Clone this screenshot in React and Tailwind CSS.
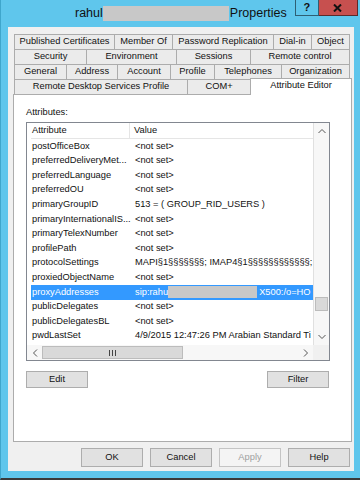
import React from 'react';

const tabRows = [
  [
    ['Published Certificates', 'w-[100px]'],
    ['Member Of', 'w-[58px]'],
    ['Password Replication', 'w-[101px]'],
    ['Dial-in', 'w-[38px]'],
    ['Object', 'w-[39px]'],
  ],
  [
    ['Security', 'w-[72px]'],
    ['Environment', 'w-[90px]'],
    ['Sessions', 'w-[74px]'],
    ['Remote control', 'w-[100px]'],
  ],
  [
    ['General', 'w-[52px]'],
    ['Address', 'w-[51px]'],
    ['Account', 'w-[53px]'],
    ['Profile', 'w-[44px]'],
    ['Telephones', 'w-[67px]'],
    ['Organization', 'w-[69px]'],
  ],
];

const attrs = [
  ['postOfficeBox', '<not set>'],
  ['preferredDeliveryMet...', '<not set>'],
  ['preferredLanguage', '<not set>'],
  ['preferredOU', '<not set>'],
  ['primaryGroupID', '513 = ( GROUP_RID_USERS )'],
  ['primaryInternationalIS...', '<not set>'],
  ['primaryTelexNumber', '<not set>'],
  ['profilePath', '<not set>'],
  ['protocolSettings', 'MAPI§1§§§§§§§; IMAP4§1§§§§§§§§§§§§; I'],
  ['proxiedObjectName', '<not set>'],
  ['proxyAddresses', null],
  ['publicDelegates', '<not set>'],
  ['publicDelegatesBL', '<not set>'],
  ['pwdLastSet', '4/9/2015 12:47:26 PM Arabian Standard Ti'],
];

const Tab = ({ label, w, last }) => (
  <div
    className={`${w} h-[15px] flex items-center justify-center bg-[#ebebeb] border-t border-l border-[#acacac] ${last ? 'border-r' : ''}`}
  >
    {label}
  </div>
);

const Btn = ({ children, className = '' }) => (
  <div
    className={`w-[62px] flex items-center justify-center bg-[#e1e1e1] border border-[#adadad] ${className}`}
  >
    {children}
  </div>
);

const Chevron = ({ d }) => (
  <svg width="8" height="6" viewBox="0 0 8 6" fill="none" stroke="#555" strokeWidth="1">
    <path d={d} />
  </svg>
);

const App = () => {
  return (
    <div className="w-[360px] h-[480px] bg-[#5fc6ec] border-l border-b-2 border-l-[#3fa6cc] border-b-[#3a3a3a] font-['Liberation_Sans',Arial,sans-serif] text-[#111] text-[9.3px] leading-none overflow-hidden">
      {/* title bar */}
      <div className="h-[27px] flex items-start pl-[74px]">
        <div className="h-[27px] flex items-center text-[12.5px] pb-[1px]">
          <span>rahul</span>
          <span className="w-[126px] h-[15px] bg-[#c8c8c8] mr-[1px]" />
          <span>Properties</span>
        </div>
        <div className="ml-[8px] w-[24px] h-[16px] flex items-center justify-center border border-t-0 border-[#2e5f74] font-bold text-[11px]">
          ?
        </div>
        <div className="w-[39px] h-[16px] flex items-center justify-center bg-[#c7504f] border border-t-0 border-l-0 border-[#5c2b2b]">
          <svg width="9" height="8" viewBox="0 0 9 8" stroke="#111" strokeWidth="2">
            <path d="M1 0.5 L8 7.5 M8 0.5 L1 7.5" />
          </svg>
        </div>
      </div>

      {/* body */}
      <div className="ml-[7px] w-[346px] h-[444px] bg-[#f0f0f0] flex flex-col">
        <div className="pt-[7px] pl-[6px]">
          {tabRows.map((row, i) => (
            <div key={i} className="flex">
              {row.map(([label, w], j) => (
                <Tab key={label} label={label} w={w} last={j === row.length - 1} />
              ))}
            </div>
          ))}
          <div className="flex items-start h-[15px]">
            <Tab label="Remote Desktop Services Profile" w="w-[173px]" />
            <Tab label="COM+" w="w-[63px]" />
            <div className="relative z-10 -mt-px w-[102px] h-[17px] flex items-center justify-center bg-white border-t border-l border-r border-[#acacac] pb-[2px]">
              Attribute Editor
            </div>
          </div>
        </div>

        {/* panel */}
        <div className="ml-[5px] w-[339px] h-[348px] bg-white border border-[#acacac] pl-[12px] pt-[12px]">
          <div className="h-[12px] flex items-center">Attributes:</div>

          <div className="mt-[3px] w-[304px] h-[239px] border border-[#828790] flex flex-col">
            <div className="flex h-[222px]">
              <div className="w-[286px] pl-[4px] overflow-hidden">
                <div className="flex h-[16px] border-b border-[#e5e5e5] items-center">
                  <div className="w-[99px] shrink-0 h-full flex items-center pl-[1px] border-r border-[#e5e5e5]">Attribute</div>
                  <div className="pl-[4px]">Value</div>
                </div>
                {attrs.map(([name, value]) =>
                  value === null ? (
                    <div key={name} className="flex h-[14.6px] items-center bg-[#3399ff] text-white whitespace-nowrap">
                      <div className="w-[102px] shrink-0 pl-[1px]">{name}</div>
                      <div className="pl-[2px] flex items-center shrink-0">
                        <span>sip:rahul</span>
                        <span className="-ml-[2px] w-[89px] h-[12px] bg-[#c8c8c8]" />
                        <span className="pl-[2px]">X500:/o=HO</span>
                      </div>
                    </div>
                  ) : (
                    <div key={name} className="flex h-[14.6px] items-center whitespace-nowrap">
                      <div className="w-[102px] shrink-0 pl-[1px]">{name}</div>
                      <div className="pl-[2px] shrink-0">{value}</div>
                    </div>
                  )
                )}
              </div>
              {/* vertical scrollbar */}
              <div className="w-[16px] flex flex-col bg-[#f7f7f7] border-l border-[#e0e0e0]">
                <div className="h-[15px] flex items-center justify-center">
                  <Chevron d="M0.5 5 L4 1.5 L7.5 5" />
                </div>
                <div className="flex-1 pt-[159px]">
                  <div className="h-[14px] mx-[1px] bg-[#d9d9d9] border border-[#bcbcbc]" />
                </div>
                <div className="h-[16px] flex items-center justify-center">
                  <Chevron d="M0.5 1 L4 4.5 L7.5 1" />
                </div>
              </div>
            </div>
            {/* horizontal scrollbar */}
            <div className="flex h-[15px]">
              <div className="w-[286px] flex bg-[#f7f7f7]">
                <div className="w-[15px] flex items-center justify-center">
                  <svg width="6" height="8" viewBox="0 0 6 8" fill="none" stroke="#555">
                    <path d="M5 0.5 L1.5 4 L5 7.5" />
                  </svg>
                </div>
                <div className="w-[141px] my-[1px] bg-[#d9d9d9] border border-[#bcbcbc] flex items-center justify-center">
                  <svg width="7" height="6" viewBox="0 0 7 6" stroke="#444">
                    <path d="M0.5 0 V6 M3.5 0 V6 M6.5 0 V6" />
                  </svg>
                </div>
                <div className="flex-1" />
                <div className="w-[15px] flex items-center justify-center">
                  <svg width="6" height="8" viewBox="0 0 6 8" fill="none" stroke="#555">
                    <path d="M1 0.5 L4.5 4 L1 7.5" />
                  </svg>
                </div>
              </div>
              <div className="w-[16px] bg-[#f0f0f0]" />
            </div>
          </div>

          <div className="mt-[10px] w-[303px] flex justify-between">
            <Btn className="h-[17px]">Edit</Btn>
            <Btn className="h-[17px]">Filter</Btn>
          </div>
        </div>

        {/* dialog buttons */}
        <div className="mt-[6px] pr-[4px] flex justify-end gap-[7px] h-[19px]">
          <Btn className="border-[#6f9bcc]">OK</Btn>
          <Btn>Cancel</Btn>
          <Btn className="bg-[#f4f4f4] border-[#c4c4c4] text-[#a0a0a0]">Apply</Btn>
          <Btn>Help</Btn>
        </div>
      </div>
    </div>
  );
};

export default App;
